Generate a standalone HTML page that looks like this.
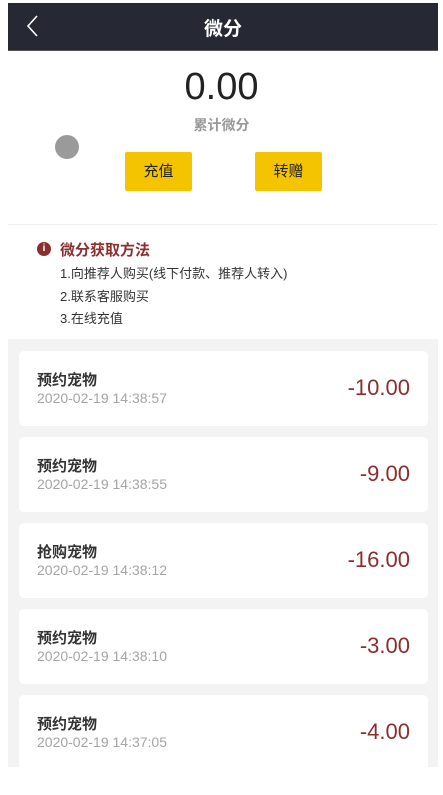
<!DOCTYPE html>
<html><head><meta charset="utf-8"><style>
*{margin:0;padding:0;box-sizing:border-box}
body{width:443px;height:795px;background:#fff;position:relative;overflow:hidden;font-family:"Liberation Sans","Noto Sans CJK SC",sans-serif}
.a{position:absolute}
.hdr{left:8px;top:3px;width:430px;height:48px;background:#262834;border-bottom:1px solid #555}
.ttl{left:8px;width:430px;top:14px;text-align:center;color:#fff;font-size:19px;font-weight:bold}
.btn{width:67px;height:39px;background:#f5c400;font-size:15px;text-align:center;line-height:39px;color:#222;border-radius:2px}
.gray{left:8px;top:339px;width:430px;height:428px;background:#f3f3f3;overflow:hidden}
.card{position:absolute;left:11px;width:409px;height:75px;background:#fff;border-radius:5px}
.card .n{position:absolute;left:18px;top:18px;font-size:15px;color:#333;font-weight:bold}
.card .d{position:absolute;left:18px;top:39px;font-size:14px;color:#a5a5a5}
.card .v{position:absolute;right:18px;top:24px;font-size:22px;color:#8b2e2e}
.info{left:60px;font-size:13px;color:#333}
</style></head><body>
<div class="a hdr"></div>
<svg class="a" style="left:26px;top:14px" width="14" height="24"><path d="M11 2L2 12L11 22" fill="none" stroke="#fff" stroke-width="1.6"/></svg>
<div class="a ttl">微分</div>
<div class="a" style="left:8px;top:224px;width:430px;height:1px;background:#f0f0f0"></div>
<div class="a" style="left:0;width:443px;top:66px;text-align:center;font-size:38px;color:#222">0.00</div>
<div class="a" style="left:0;width:443px;top:115px;text-align:center;font-size:14px;color:#999;font-weight:bold">累计微分</div>
<div class="a" style="left:55px;top:135px;width:24px;height:24px;border-radius:50%;background:#9a9a9a"></div>
<div class="a btn" style="left:125px;top:152px">充值</div>
<div class="a btn" style="left:255px;top:152px">转赠</div>
<div class="a" style="left:37px;top:242px;width:14px;height:14px;border-radius:50%;background:#8b2e2e;color:#fff;font-size:10px;text-align:center;line-height:14px;font-weight:bold">i</div>
<div class="a" style="left:60px;top:239px;font-size:15px;font-weight:bold;color:#8b2e2e">微分获取方法</div>
<div class="a info" style="top:263px">1.向推荐人购买(线下付款、推荐人转入)</div>
<div class="a info" style="top:286px">2.联系客服购买</div>
<div class="a info" style="top:308px">3.在线充值</div>
<div class="a gray">
<div class="card" style="top:12px"><div class="n">预约宠物</div><div class="d">2020-02-19 14:38:57</div><div class="v">-10.00</div></div>
<div class="card" style="top:98px"><div class="n">预约宠物</div><div class="d">2020-02-19 14:38:55</div><div class="v">-9.00</div></div>
<div class="card" style="top:184px"><div class="n">抢购宠物</div><div class="d">2020-02-19 14:38:12</div><div class="v">-16.00</div></div>
<div class="card" style="top:270px"><div class="n">预约宠物</div><div class="d">2020-02-19 14:38:10</div><div class="v">-3.00</div></div>
<div class="card" style="top:356px"><div class="n">预约宠物</div><div class="d">2020-02-19 14:37:05</div><div class="v">-4.00</div></div>
</div>
</body></html>
